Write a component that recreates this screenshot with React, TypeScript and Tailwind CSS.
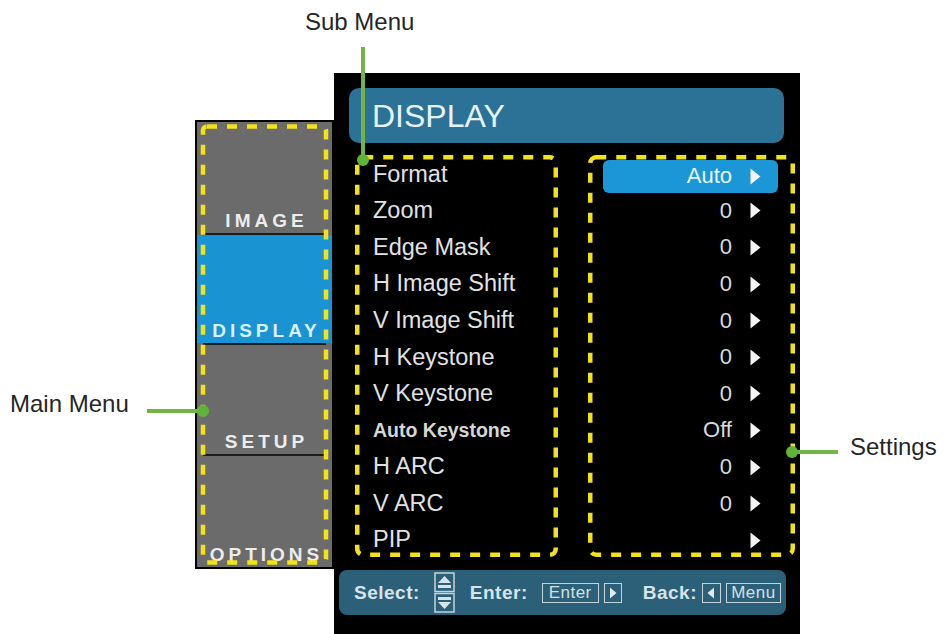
import React from "react";

const items = [
  "Format",
  "Zoom",
  "Edge Mask",
  "H Image Shift",
  "V Image Shift",
  "H Keystone",
  "V Keystone",
  "Auto Keystone",
  "H ARC",
  "V ARC",
  "PIP",
];
const values = ["Auto", "0", "0", "0", "0", "0", "0", "Off", "0", "0", ""];

function Tri() {
  return (
    <svg width="11" height="17" viewBox="0 0 11 17" className="shrink-0">
      <path d="M0.5 0.5 L10.5 8.5 L0.5 16.5 Z" fill="#f4f4f4" />
    </svg>
  );
}

function Dashed({ w, h, rx = 6, x = 2.25, y = 2.25 }: { w: number; h: number; rx?: number; x?: number; y?: number }) {
  return (
    <svg width={w} height={h} className="absolute left-0 top-0 pointer-events-none" viewBox={`0 0 ${w} ${h}`}>
      <rect
        x={x}
        y={y}
        width={w - 2 * x}
        height={h - 2 * y}
        rx={rx}
        fill="none"
        stroke="#f2e21a"
        strokeWidth="4.5"
        strokeDasharray="10 10"
      />
    </svg>
  );
}

function MenuSection({ label, active, h }: { label: string; active?: boolean; h: string }) {
  return (
    <div
      className={`${h} flex items-end justify-center pb-[2px] ${active ? "bg-[#1a93d3] text-[#d9f0ff]" : "bg-[#6b6b6b] text-[#ececec]"}`}
    >
      <span className="text-[19px] leading-[20px] font-bold tracking-[4px] pl-[4px]">{label}</span>
    </div>
  );
}

function Sep() {
  return <div className="h-[2px] bg-[#1c1c1c] mx-[6px]" />;
}

function KeyBox({ children, w }: { children: React.ReactNode; w: string }) {
  return (
    <div className={`${w} h-[20px] border-[1.5px] border-[#c3d3da] flex items-center justify-center text-[17px] leading-[18px] font-normal text-[#d2e0e6]`}>
      {children}
    </div>
  );
}

export default function App() {
  return (
    <div className="relative w-[948px] h-[634px] bg-white overflow-hidden font-['Liberation_Sans',Arial,sans-serif]">
      <div className="flex pl-[195px] pt-[73px]">
        {/* Main menu */}
        <div className="mt-[47px] w-[139px] h-[449px] border-2 border-black bg-[#6b6b6b] relative flex flex-col">
          <MenuSection label="IMAGE" h="h-[111px]" />
          <Sep />
          <MenuSection label="DISPLAY" active h="h-[108px]" />
          <Sep />
          <MenuSection label="SETUP" h="h-[109px]" />
          <Sep />
          <MenuSection label="OPTIONS" h="h-[111px]" />
          <Dashed w={135} h={445} rx={4} x={6} y={4.5} />
        </div>

        {/* Panel */}
        <div className="w-[466px] h-[561px] bg-black flex flex-col">
          <div className="ml-[15px] mt-[15px] w-[435px] h-[55px] rounded-[10px] bg-[#2c7196] flex items-center pl-[23px]">
            <span className="text-[32px] leading-none text-[#e6f3fa]">DISPLAY</span>
          </div>

          <div className="flex mt-[12px] ml-[21px] gap-[30px]">
            {/* Sub menu */}
            <div className="relative w-[203px] h-[402px] pt-[1px] pl-[18px]">
              {items.map((it) => (
                <div key={it} className="h-[36.6px] flex items-center">
                  {it === "Auto Keystone" ? (
                    <span className="text-[19.5px] font-bold text-[#d6d6d6] leading-none">{it}</span>
                  ) : (
                    <span className="text-[23.5px] text-[#e2e2e2] leading-none">{it}</span>
                  )}
                </div>
              ))}
              <Dashed w={203} h={402} />
            </div>

            {/* Settings */}
            <div className="relative w-[207px] h-[402px] pt-[1px] pl-[15px] pr-[17px]">
              {values.map((v, i) => (
                <div key={i} className="h-[36.6px] flex items-center">
                  <div
                    className={`w-full h-[33px] flex items-center justify-end pr-[17px] gap-[18px] rounded-[6px] ${i === 0 ? "bg-[#1b97d7] mt-[4px]" : ""}`}
                  >
                    <span className={`text-[22px] leading-none ${i === 0 ? "text-[#e8f5fc]" : "text-[#dadada]"}`}>{v}</span>
                    <Tri />
                  </div>
                </div>
              ))}
              <Dashed w={207} h={402} />
            </div>
          </div>

          {/* Bottom bar */}
          <div className="ml-[5px] mt-[13px] w-[447px] h-[45px] rounded-[8px] bg-[#2c6079] flex items-center pl-[15px] text-[#d6e4ea] font-bold text-[19px] leading-none tracking-[0.5px]">
            <span>Select:</span>
            <svg width="21" height="41" viewBox="0 0 21 41" className="ml-[14px] shrink-0">
              <rect x="1" y="1" width="19" height="18.5" fill="none" stroke="#c3d3da" strokeWidth="1.5" />
              <path d="M4 11 L10.5 4 L17 11 Z" fill="#d6e4ea" />
              <rect x="4" y="13" width="13" height="3" fill="#d6e4ea" />
              <rect x="1" y="21.5" width="19" height="18.5" fill="none" stroke="#c3d3da" strokeWidth="1.5" />
              <rect x="4" y="25" width="13" height="3" fill="#d6e4ea" />
              <path d="M4 30 L10.5 37 L17 30 Z" fill="#d6e4ea" />
            </svg>
            <span className="ml-[15px]">Enter:</span>
            <div className="ml-[14px]">
              <KeyBox w="w-[57px]">Enter</KeyBox>
            </div>
            <div className="ml-[5px]">
              <KeyBox w="w-[18px]">
                <svg width="8" height="12" viewBox="0 0 8 12">
                  <path d="M1 0.5 L7.5 6 L1 11.5 Z" fill="#e0ecf0" />
                </svg>
              </KeyBox>
            </div>
            <span className="ml-[21px]">Back:</span>
            <div className="ml-[5px]">
              <KeyBox w="w-[19px]">
                <svg width="8" height="12" viewBox="0 0 8 12">
                  <path d="M7 0.5 L0.5 6 L7 11.5 Z" fill="#e0ecf0" />
                </svg>
              </KeyBox>
            </div>
            <div className="ml-[5px]">
              <KeyBox w="w-[55px]">Menu</KeyBox>
            </div>
          </div>
        </div>
      </div>

      {/* Callouts */}
      <span className="absolute left-[305px] top-[10px] text-[24px] leading-[24px] text-[#262626]">Sub Menu</span>
      <div className="absolute left-[361px] top-[47px] w-[4px] h-[113px] bg-[#72b546]" />
      <div className="absolute left-[357px] top-[154px] w-[12px] h-[12px] rounded-full bg-[#5fb338]" />

      <span className="absolute left-[10px] top-[392px] text-[24px] leading-[24px] text-[#262626]">Main Menu</span>
      <div className="absolute left-[147px] top-[409px] w-[56px] h-[4px] bg-[#72b546]" />
      <div className="absolute left-[197px] top-[405px] w-[12px] h-[12px] rounded-full bg-[#5fb338]" />

      <span className="absolute left-[850px] top-[435px] text-[24px] leading-[24px] text-[#262626]">Settings</span>
      <div className="absolute left-[790px] top-[450px] w-[48px] h-[4px] bg-[#72b546]" />
      <div className="absolute left-[786px] top-[446px] w-[12px] h-[12px] rounded-full bg-[#5fb338]" />
    </div>
  );
}
